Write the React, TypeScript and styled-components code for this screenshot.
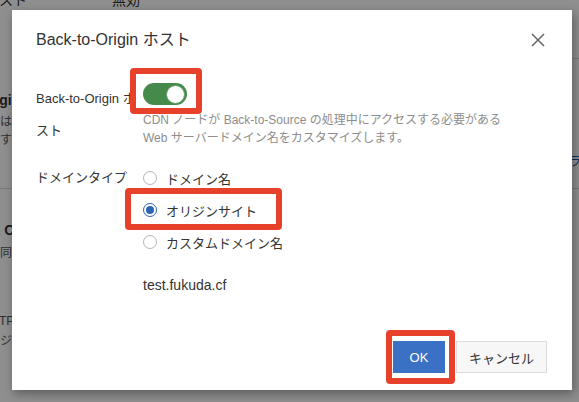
import React from "react";
import styled, { createGlobalStyle } from "styled-components";

const GlobalStyle = createGlobalStyle`
  html, body { margin: 0; padding: 0; background: #fff; }
  body { font-family: "Liberation Sans", "Noto Sans CJK JP", sans-serif; overflow: hidden; }
  * { box-sizing: border-box; }
`;

const Root = styled.div`
  position: relative;
  width: 579px;
  height: 402px;
  overflow: hidden;
  background: #fff;
`;

/* ---------- background page ---------- */
const Page = styled.div`
  margin-left: -77px;
  width: 700px;
  display: flex;
  flex-direction: column;
  color: #333;
  font-size: 14px;
`;

const TopRow = styled.div`
  display: grid;
  grid-template-columns: 104px 1fr;
  column-gap: 85px;
  margin-top: -9px;
  line-height: 18px;
`;

const TopLabel = styled.span`
  text-align: right;
  white-space: nowrap;
`;

const Divider = styled.div<{ $top: number; $indent?: number }>`
  margin-top: ${(p) => p.$top}px;
  margin-left: ${(p) => p.$indent ?? 0}px;
  height: 1px;
  background: #d9d9d9;
`;

const Heading = styled.div<{ $top: number; $indent?: number }>`
  margin-top: ${(p) => p.$top}px;
  padding-left: ${(p) => p.$indent ?? 0}px;
  font-weight: bold;
  font-size: 14px;
  line-height: 20px;
  white-space: nowrap;
`;

const PageText = styled.div<{ $top: number; $indent?: number; $link?: boolean }>`
  margin-top: ${(p) => p.$top}px;
  padding-left: ${(p) => p.$indent ?? 0}px;
  font-size: 12px;
  line-height: 18px;
  white-space: nowrap;
  color: ${(p) => (p.$link ? "#1f4fa8" : "#555")};
`;

/* ---------- overlay & dialog ---------- */
const Overlay = styled.div`
  position: absolute;
  inset: 0;
  background: rgba(0, 0, 0, 0.44);
`;

const Dialog = styled.div`
  position: absolute;
  left: 12px;
  top: 10px;
  width: 560px;
  height: 380px;
  background: #fff;
  box-shadow: 2px 4px 10px rgba(0, 0, 0, 0.35);
  display: flex;
  flex-direction: column;
  color: #333;
`;

const Header = styled.div`
  display: flex;
  align-items: center;
  justify-content: space-between;
  padding: 20px 27px 0 24px;
  height: 40px;
`;

const Title = styled.h2`
  margin: 0;
  font-size: 16px;
  font-weight: normal;
  line-height: 20px;
  color: #333;
`;

const CloseButton = styled.button`
  border: 0;
  padding: 0;
  background: none;
  width: 14px;
  height: 14px;
  display: flex;
  cursor: pointer;
`;

const Body = styled.div`
  padding: 33px 0 0 24px;
  display: flex;
  flex-direction: column;
`;

const FormRow = styled.div<{ $gap?: number }>`
  display: flex;
  margin-bottom: ${(p) => p.$gap ?? 0}px;
`;

const Label = styled.div`
  width: 100px;
  margin-right: 7px;
  font-size: 13px;
  line-height: 32px;
  color: #333;
  flex-shrink: 0;
`;

const Control = styled.div`
  display: flex;
  flex-direction: column;
  align-items: flex-start;
`;

const Highlight = styled.div<{ $t: number; $r: number; $b: number; $l: number }>`
  position: relative;
  display: inline-flex;
  &::after {
    content: "";
    position: absolute;
    top: ${(p) => -p.$t}px;
    right: ${(p) => -p.$r}px;
    bottom: ${(p) => -p.$b}px;
    left: ${(p) => -p.$l}px;
    border: 6px solid #e8412b;
    border-radius: 4px;
    pointer-events: none;
  }
`;

const Switch = styled.button<{ $on: boolean }>`
  width: 44px;
  height: 22px;
  border-radius: 11px;
  border: 0;
  padding: 2px;
  background: ${(p) => (p.$on ? "#468a4b" : "#ccc")};
  display: flex;
  justify-content: ${(p) => (p.$on ? "flex-end" : "flex-start")};
  align-items: center;
  cursor: pointer;
`;

const Knob = styled.span`
  width: 19px;
  height: 19px;
  border-radius: 50%;
  background: #fff;
  border: 1px solid #5fa063;
`;

const Description = styled.p`
  margin: 6px 0 0;
  font-size: 12px;
  line-height: 18px;
  color: #8d8d8d;
`;

const RadioGroup = styled.div`
  display: flex;
  flex-direction: column;
  align-items: flex-start;
`;

const RadioItem = styled.label`
  display: inline-flex;
  align-items: center;
  height: 32px;
  font-size: 13px;
  color: #333;
  cursor: pointer;
`;

const RadioCircle = styled.span<{ $checked: boolean }>`
  width: 14px;
  height: 14px;
  border-radius: 50%;
  border: 1px solid ${(p) => (p.$checked ? "#2e64b5" : "#b5b5b5")};
  background: #fff;
  display: flex;
  align-items: center;
  justify-content: center;
  margin-right: 9px;
  &::after {
    content: "";
    width: 8px;
    height: 8px;
    border-radius: 50%;
    background: ${(p) => (p.$checked ? "#2e64b5" : "transparent")};
  }
`;

const Value = styled.div`
  margin: 17px 0 0 107px;
  font-size: 14px;
  line-height: 20px;
  color: #333;
`;

const Footer = styled.div`
  margin-top: auto;
  display: flex;
  justify-content: flex-end;
  align-items: center;
  gap: 11px;
  padding: 0 25px 17px 0;
`;

const Button = styled.button<{ $primary?: boolean }>`
  height: 32px;
  padding: 0;
  width: ${(p) => (p.$primary ? 52 : 91)}px;
  font-family: inherit;
  font-size: 13px;
  border: 1px solid ${(p) => (p.$primary ? "#3b71c5" : "#dcdcdc")};
  background: ${(p) => (p.$primary ? "#3b71c5" : "#f7f7f7")};
  color: ${(p) => (p.$primary ? "#fff" : "#333")};
  cursor: pointer;
`;

const options = ["ドメイン名", "オリジンサイト", "カスタムドメイン名"];

export default function App() {
  const selected = "オリジンサイト";
  return (
    <Root>
      <GlobalStyle />
      <Page>
        <TopRow>
          <TopLabel>オリジンホスト</TopLabel>
          <span>無効</span>
        </TopRow>
        <Divider $top={49} $indent={189} />
        <Heading $top={31}>Back-to-Origin ホスト</Heading>
        <PageText $top={3} $indent={5}>デフォルトでは、オリジンのプロトコル</PageText>
        <PageText $top={0} $indent={5}>サイトで使用するドメイン名</PageText>
        <PageText $top={4} $indent={646} $link>ライ</PageText>
        <Divider $top={17} />
        <Heading $top={31} $indent={30}>Shared Cache</Heading>
        <PageText $top={4} $indent={65}>共同キャッシュ</PageText>
        <PageText $top={50} $indent={60}>HTTPSS</PageText>
        <PageText $top={2} $indent={53}>オリジンウセ</PageText>
        <PageText $top={13} $indent={190} $link>Origin 変更</PageText>
      </Page>
      <Overlay />
      <Dialog role="dialog">
        <Header>
          <Title>Back-to-Origin ホスト</Title>
          <CloseButton aria-label="close">
            <svg width="14" height="14" viewBox="0 0 14 14">
              <path d="M1 1 L13 13 M13 1 L1 13" stroke="#666" strokeWidth="1.5" fill="none" />
            </svg>
          </CloseButton>
        </Header>
        <Body>
          <FormRow $gap={15}>
            <Label>Back-to-Origin ホスト</Label>
            <Control>
              <Highlight $t={15} $r={15} $b={9} $l={13}>
                <Switch $on>
                  <Knob />
                </Switch>
              </Highlight>
              <Description>
                CDN ノードが Back-to-Source の処理中にアクセスする必要がある
                <br />
                Web サーバードメイン名をカスタマイズします。
              </Description>
            </Control>
          </FormRow>
          <FormRow>
            <Label>ドメインタイプ</Label>
            <RadioGroup>
              {options.map((o) =>
                o === selected ? (
                  <Highlight key={o} $t={6} $r={25} $b={4} $l={18}>
                    <RadioItem>
                      <RadioCircle $checked />
                      {o}
                    </RadioItem>
                  </Highlight>
                ) : (
                  <RadioItem key={o}>
                    <RadioCircle $checked={false} />
                    {o}
                  </RadioItem>
                )
              )}
            </RadioGroup>
          </FormRow>
          <Value>test.fukuda.cf</Value>
        </Body>
        <Footer>
          <Highlight $t={11} $r={10} $b={11} $l={7}>
            <Button $primary>OK</Button>
          </Highlight>
          <Button>キャンセル</Button>
        </Footer>
      </Dialog>
    </Root>
  );
}
